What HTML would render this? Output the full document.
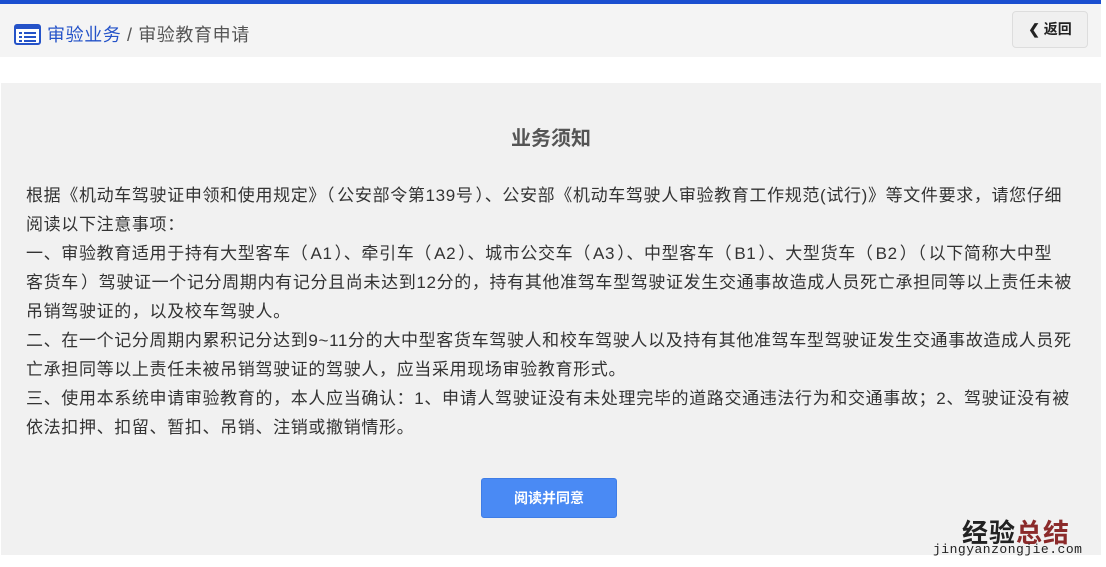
<!DOCTYPE html>
<html><head><meta charset="utf-8"><style>
body{margin:0;width:1106px;height:567px;background:#fff;font-family:"Liberation Sans","Noto Sans CJK SC",sans-serif;overflow:hidden;position:relative}
.top{position:absolute;left:0;top:0;width:1101px;height:4px;background:#1a4fd0}
.hdr{position:absolute;left:0;top:4px;width:1101px;height:53px;background:#f4f4f4}
.crumb{position:absolute;left:14px;top:19px;font-size:18px;line-height:24px;color:#555;white-space:nowrap;letter-spacing:0.6px}
.crumb .b{color:#2553c8}
.ico{display:inline-block;vertical-align:-4px;margin-right:6px}
.back{position:absolute;left:1012px;top:7px;width:76px;height:37px;border:1px solid #ddd;border-radius:4px;background:#f0f0f0;box-sizing:border-box;font-size:14px;color:#222;text-align:center;line-height:35px;font-weight:bold}
.panel{position:absolute;left:1px;top:83px;width:1100px;height:472px;background:#f1f1f1}
.title{position:absolute;left:0;width:1100px;top:44px;text-align:center;font-size:20px;font-weight:bold;color:#555;line-height:24px}
.txt{position:absolute;left:25px;top:98px;font-size:17px;line-height:29px;color:#333;white-space:nowrap;letter-spacing:0.65px}
.btn{position:absolute;left:480px;top:395px;width:136px;height:40px;background:#4a8af4;border:1px solid #3f7de6;box-sizing:border-box;border-radius:3px;color:#fff;font-size:14px;font-weight:bold;text-align:center;line-height:38px}
.wm{position:absolute;left:962px;top:513px;font-size:26px;font-weight:bold;color:#222;letter-spacing:1px}
.wm span{color:#8b2a2a}
.wm2{position:absolute;left:933px;top:542px;font-size:13px;color:#222;letter-spacing:0.5px;font-family:"Liberation Mono",monospace}
</style></head><body>
<div class="top"></div>
<div class="hdr"><div class="crumb"><svg class="ico" width="27" height="21" viewBox="0 0 27 21"><rect x="1" y="1" width="25" height="19" rx="2" fill="#fff" stroke="#2553c8" stroke-width="2"/><rect x="1" y="1" width="25" height="4" fill="#2553c8"/><rect x="5" y="8" width="3" height="2" fill="#2553c8"/><rect x="10" y="8" width="12" height="2" fill="#2553c8"/><rect x="5" y="12" width="3" height="2" fill="#2553c8"/><rect x="10" y="12" width="12" height="2" fill="#2553c8"/><rect x="5" y="16" width="3" height="2" fill="#2553c8"/><rect x="10" y="16" width="12" height="2" fill="#2553c8"/></svg><span class="b">审验业务</span> / 审验教育申请</div>
<div class="back">&#10094; 返回</div></div>
<div class="panel">
<div class="title">业务须知</div>
<div class="txt">根据《机动车驾驶证申领和使用规定》（&#8202;公安部令第139号&#8202;）、公安部《机动车驾驶人审验教育工作规范(试行)》等文件要求，请您仔细<br>阅读以下注意事项：<br>一、审验教育适用于持有大型客车（&#8202;A1&#8202;）、牵引车（&#8202;A2&#8202;）、城市公交车（&#8202;A3&#8202;）、中型客车（&#8202;B1&#8202;）、大型货车（&#8202;B2&#8202;）（&#8202;以下简称大中型<br>客货车&#8202;）驾驶证一个记分周期内有记分且尚未达到12分的，持有其他准驾车型驾驶证发生交通事故造成人员死亡承担同等以上责任未被<br>吊销驾驶证的，以及校车驾驶人。<br>二、在一个记分周期内累积记分达到9~11分的大中型客货车驾驶人和校车驾驶人以及持有其他准驾车型驾驶证发生交通事故造成人员死<br>亡承担同等以上责任未被吊销驾驶证的驾驶人，应当采用现场审验教育形式。<br>三、使用本系统申请审验教育的，本人应当确认：1、申请人驾驶证没有未处理完毕的道路交通违法行为和交通事故；2、驾驶证没有被<br>依法扣押、扣留、暂扣、吊销、注销或撤销情形。</div>
<div class="btn">阅读并同意</div>
</div>
<div class="wm">经验<span>总结</span></div>
<div class="wm2">jingyanzongjie.com</div>
</body></html>
